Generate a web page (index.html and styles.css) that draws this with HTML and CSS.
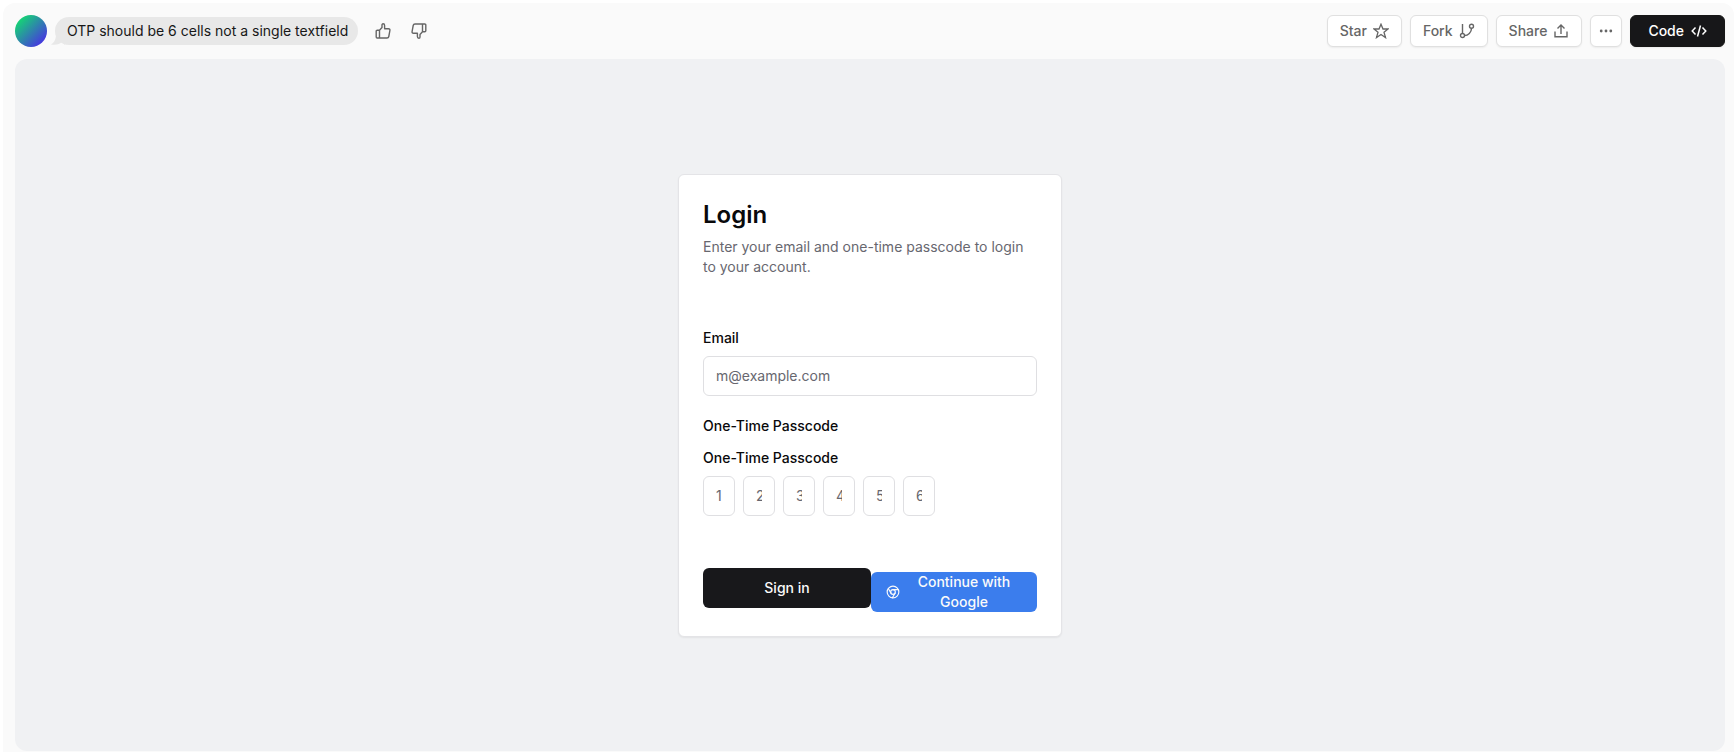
FILE: index.html
```
<!DOCTYPE html>
<html lang="en">
<head>
    <meta charset="UTF-8">
    <meta name="viewport" content="width=device-width, initial-scale=1.0">
    <title>Login</title>
    <link rel="stylesheet" href="styles.css">
</head>
<body>
    <div class="shell">
        <header class="toolbar">
            <div class="avatar"></div>
            <div class="prompt">
                <svg class="prompt-tail" width="14" height="12" viewBox="0 0 14 12" fill="currentColor"><path d="M5 0C5 6 4 9 0 11.500C5 12.500 9 11 11 9L14 12V0Z"/></svg>
                OTP should be 6 cells not a single textfield
            </div>
            <div class="votes">
                <button class="vote" type="button" aria-label="Good result">
                    <svg width="16" height="16" viewBox="0 0 16 16" fill="none" stroke="currentColor" stroke-width="1.400" stroke-linejoin="round"><path d="M4.500 7.200H2.200Q1.200 7.200 1.200 8.200V14Q1.200 15 2.200 15H4.500ZM4.500 7.200L7 4.500V2Q7 .8 8.100 .8Q9.600 .8 9.600 2.500V5.800H13.500Q15.200 5.800 14.900 7.500L13.800 13.500Q13.500 15 12 15H4.500"/></svg>
                </button>
                <button class="vote" type="button" aria-label="Bad result">
                    <svg width="16" height="16" viewBox="0 0 16 16" fill="none" stroke="currentColor" stroke-width="1.400" stroke-linejoin="round"><path d="M11.500 8.800H13.800Q14.800 8.800 14.800 7.800V2Q14.800 1 13.800 1H11.500ZM11.500 8.800L9 11.500V14Q9 15.200 7.900 15.200Q6.400 15.200 6.400 13.500V10.200H2.500Q.8 10.200 1.100 8.500L2.200 2.500Q2.500 1 4 1H11.500"/></svg>
                </button>
            </div>
            <div class="actions">
                <button class="btn" type="button">Star
                    <svg width="16" height="16" viewBox="0 0 16 16" fill="none" stroke="currentColor" stroke-width="1.300"><path d="M8 1.200L10 6H15L11 9.200L12.500 14.600L8 11.500L3.500 14.600L5 9.200L1 6H6Z"/></svg>
                </button>
                <button class="btn" type="button">Fork
                    <svg width="16" height="16" viewBox="0 0 16 16" fill="none" stroke="currentColor" stroke-width="1.400"><path d="M3.500 1V10.500M12.500 5.200C12.500 9.500 9 12.500 5.500 12.500"/><circle cx="3.500" cy="12.500" r="2"/><circle cx="12.500" cy="3.200" r="2"/></svg>
                </button>
                <button class="btn" type="button">Share
                    <svg width="16" height="16" viewBox="0 0 16 16" fill="none" stroke="currentColor" stroke-width="1.400"><path d="M2 8.500V13.800H14V8.500M8 11V2.500M4.500 5.500L8 2L11.500 5.500"/></svg>
                </button>
                <button class="btn btn-more" type="button" aria-label="More">
                    <svg width="16" height="16" viewBox="0 0 16 16" fill="currentColor"><circle cx="3.200" cy="8" r="1.400"/><circle cx="8" cy="8" r="1.400"/><circle cx="12.800" cy="8" r="1.400"/></svg>
                </button>
                <button class="btn btn-code" type="button">Code
                    <svg width="16" height="16" viewBox="0 0 16 16" fill="none" stroke="currentColor" stroke-width="1.500"><path d="M4.500 4.500L1.200 8L4.500 11.500M11.500 4.500L14.800 8L11.500 11.500M9.500 2.500L6.500 13.500"/></svg>
                </button>
            </div>
        </header>
        <main class="preview">
            <form class="card">
                <h1>Login</h1>
                <p class="description">Enter your email and one-time passcode to login to your account.</p>
                <div class="fields">
                    <div class="field">
                        <label for="email">Email</label>
                        <input class="input" id="email" type="email" placeholder="m@example.com">
                    </div>
                    <div class="field">
                        <label class="group-label" for="otp">One-Time Passcode</label>
                        <label for="otp">One-Time Passcode</label>
                        <div class="otp">
                            <input class="input" id="otp" type="text" maxlength="1" placeholder="1">
                            <input class="input" type="text" maxlength="1" placeholder="2" aria-label="Digit 2">
                            <input class="input" type="text" maxlength="1" placeholder="3" aria-label="Digit 3">
                            <input class="input" type="text" maxlength="1" placeholder="4" aria-label="Digit 4">
                            <input class="input" type="text" maxlength="1" placeholder="5" aria-label="Digit 5">
                            <input class="input" type="text" maxlength="1" placeholder="6" aria-label="Digit 6">
                        </div>
                    </div>
                </div>
                <div class="card-footer">
                    <button class="submit" type="submit">Sign in</button>
                    <button class="submit google" type="button">
                        <svg width="14" height="14" viewBox="0 0 24 24" fill="none" stroke="currentColor" stroke-width="2" stroke-linecap="round"><circle cx="12" cy="12" r="10"/><circle cx="12" cy="12" r="4"/><path d="M21.170 8H12M3.950 6.060L8.540 14M10.880 21.940L15.460 14"/></svg>
                        <span>Continue with Google</span>
                    </button>
                </div>
            </form>
        </main>
    </div>
</body>
</html>
```
FILE: styles.css
```
* {
    box-sizing: border-box;
}
body {
    margin: 0;
    background: #fff;
    color: #09090b;
    font-family: Inter, sans-serif;
    font-size: 14px;
    line-height: 20px;
}
button,
input {
    font: inherit;
}
.shell {
    display: flex;
    flex-direction: column;
    height: calc(100vh - 3px);
    margin: 3px 0 0 3px;
    padding: 0 9px 1px 12px;
    border-radius: 12px 12px 0 0;
    background: #fafafa;
}
.toolbar {
    display: flex;
    align-items: center;
    padding: 12px 0;
}
.avatar {
    width: 32px;
    height: 32px;
    border-radius: 50%;
    background: linear-gradient(135deg, #0fe768 5%, #4a2be8 92%);
}
.prompt {
    position: relative;
    z-index: 0;
    margin-left: 8px;
    padding: 4px 10px 4px 12px;
    border-radius: 14px;
    background: #e8e8e8;
    color: #171717;
}
.prompt-tail {
    position: absolute;
    left: -4px;
    bottom: 0;
    color: #e8e8e8;
    z-index: -1;
}
.votes {
    display: flex;
    gap: 4px;
    margin-left: 9px;
}
.vote {
    display: flex;
    align-items: center;
    justify-content: center;
    width: 32px;
    height: 32px;
    padding: 0;
    border: none;
    background: none;
    color: #666;
}
.actions {
    display: flex;
    gap: 8px;
    margin-left: auto;
}
.btn {
    display: flex;
    align-items: center;
    gap: 6px;
    height: 32px;
    padding: 0 12px;
    border: 1px solid #e0e0e0;
    border-radius: 6px;
    background: #fff;
    box-shadow: 0 1px 2px rgba(0, 0, 0, 0.06);
    color: #666;
    font-weight: 500;
}
.btn-more {
    justify-content: center;
    width: 32px;
    padding: 0;
}
.btn-code {
    gap: 7px;
    padding: 0 17px;
    border-color: #171717;
    background: #171719;
    color: #fff;
}
.preview {
    display: flex;
    flex: 1;
    align-items: center;
    justify-content: center;
    border-radius: 12px;
    background: #f0f1f3;
}
.card {
    width: 384px;
    padding: 24px;
    border: 1px solid #e4e4e7;
    border-radius: 6px;
    background: #fff;
    box-shadow: 0 1px 2px rgba(0, 0, 0, 0.06);
}
h1 {
    margin: 0 0 6px;
    font-size: 24px;
    font-weight: 600;
    line-height: 32px;
}
.description {
    margin: 0;
    color: #67676f;
}
.fields {
    display: flex;
    flex-direction: column;
    gap: 20px;
    padding: 51px 0 48px;
}
.field {
    display: flex;
    flex-direction: column;
    gap: 8px;
}
label {
    font-weight: 500;
}
.group-label {
    margin-bottom: 4px;
}
.input {
    width: 100%;
    height: 40px;
    padding: 8px 12px;
    border: 1px solid #dfdfe2;
    border-radius: 6px;
    background: #fff;
    color: #09090b;
}
.input::placeholder {
    color: #67676f;
    opacity: 1;
}
.otp {
    display: flex;
    gap: 8px;
}
.otp .input {
    width: 32px;
}
.card-footer {
    display: flex;
    align-items: center;
}
.submit {
    display: flex;
    flex: 1;
    align-items: center;
    justify-content: center;
    height: 40px;
    padding: 0 16px;
    border: none;
    border-radius: 6px;
    background: #18181b;
    color: #fafafa;
    font-weight: 500;
}
.google {
    gap: 6px;
    margin-top: 8px;
    padding: 0 15px;
    background: #3b7ded;
}
.google svg {
    flex: none;
}
```
